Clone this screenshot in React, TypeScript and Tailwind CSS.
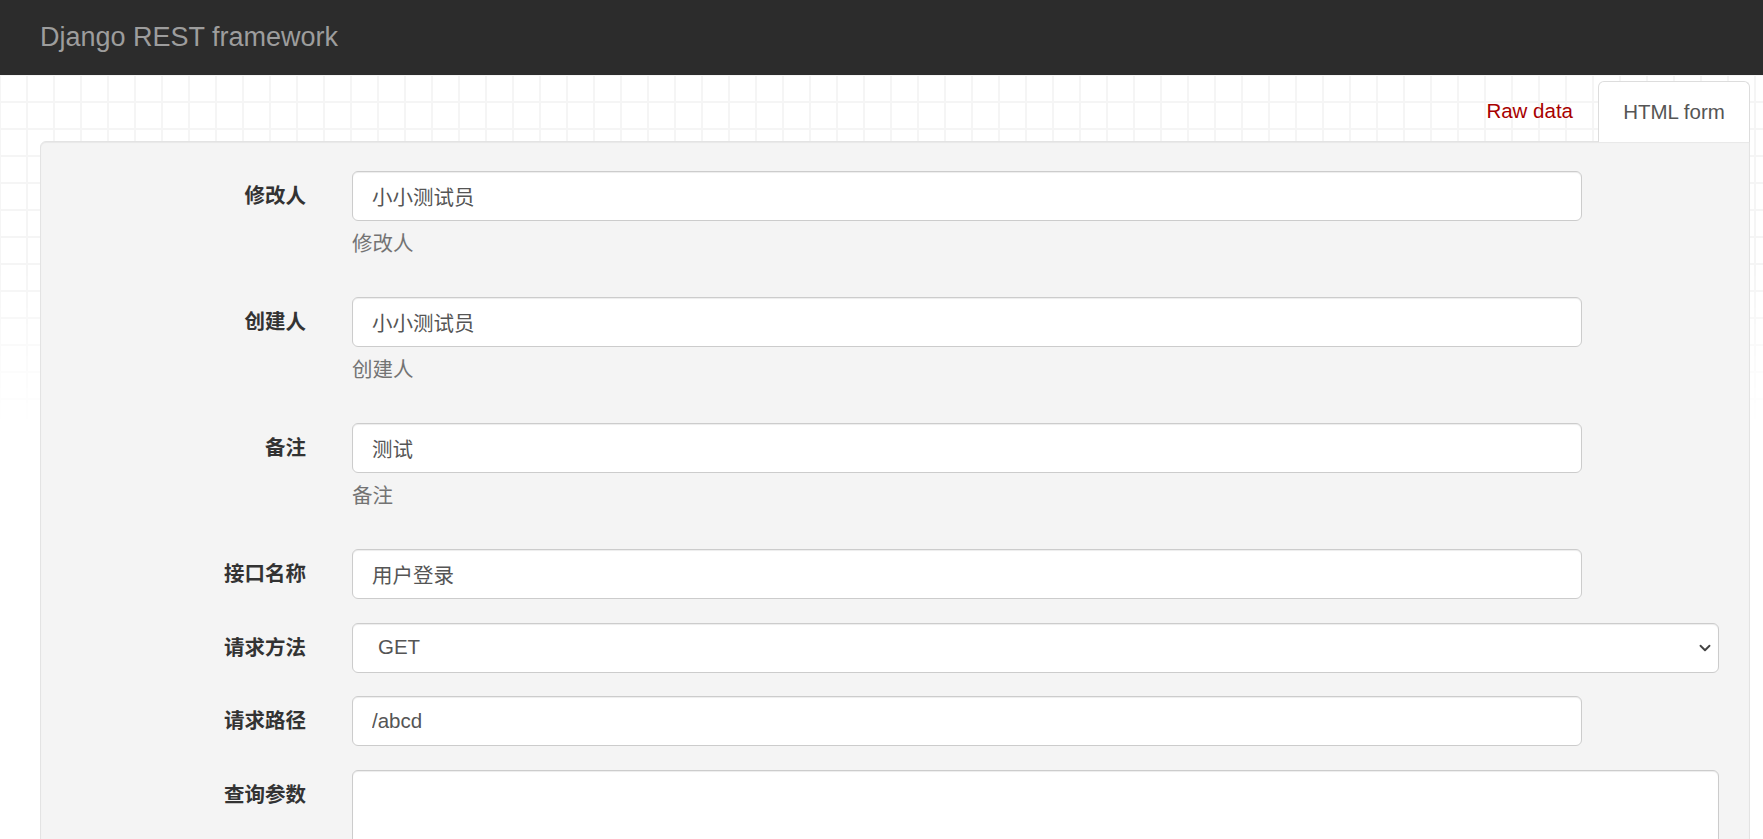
import { ChevronDown } from 'lucide-react';

type Field = {
  label: string;
  value: string;
  help?: string;
  kind?: 'input' | 'select' | 'textarea';
};

const fields: Field[] = [
  { label: '修改人', value: '小小测试员', help: '修改人' },
  { label: '创建人', value: '小小测试员', help: '创建人' },
  { label: '备注', value: '测试', help: '备注' },
  { label: '接口名称', value: '用户登录' },
  { label: '请求方法', value: 'GET', kind: 'select' },
  { label: '请求路径', value: '/abcd' },
  { label: '查询参数', value: '', kind: 'textarea' },
];

const inputBase =
  'block h-[50px] rounded-[6px] border border-[#cccccc] bg-white text-[20.5px] text-[#555555] shadow-[inset_0_1px_1px_rgba(0,0,0,0.075)] outline-none';

function Control({ field }: { field: Field }) {
  if (field.kind === 'select') {
    return (
      <div className="relative w-full">
        <select
          defaultValue={field.value}
          className={`${inputBase} w-full appearance-none pl-[25px] pr-10`}
        >
          <option>GET</option>
          <option>POST</option>
          <option>PUT</option>
          <option>DELETE</option>
        </select>
        <ChevronDown
          className="pointer-events-none absolute right-[5px] top-[16px] h-[18px] w-[18px] text-[#444]"
          strokeWidth={2.5}
        />
      </div>
    );
  }
  if (field.kind === 'textarea') {
    return (
      <textarea
        defaultValue={field.value}
        className="block h-[110px] w-full resize-y rounded-[6px] border border-[#cccccc] bg-white px-[19px] py-[9px] text-[20.5px] text-[#555555] shadow-[inset_0_1px_1px_rgba(0,0,0,0.075)] outline-none"
      />
    );
  }
  return (
    <input
      type="text"
      defaultValue={field.value}
      className={`${inputBase} w-[90%] px-[19px]`}
    />
  );
}

export default function App() {
  return (
    <div className="min-h-screen bg-white font-['Liberation_Sans','Noto_Sans_CJK_SC',sans-serif]">
      {/* navbar */}
      <div className="flex h-[75px] items-center bg-[#2c2c2c] px-[40px]">
        <span className="text-[27px] text-[#9d9d9d]">Django REST framework</span>
      </div>

      <div className="relative">
        {/* grid backdrop */}
        <div className="pointer-events-none absolute inset-x-0 top-0 h-[352px] bg-[linear-gradient(to_right,#f5f5f5_2px,transparent_2px),linear-gradient(to_bottom,#f5f5f5_2px,transparent_2px)] bg-[size:27px_27px] bg-[position:-1px_-1px] [mask-image:linear-gradient(to_bottom,black_55%,transparent)]" />

        <div className="relative pl-[40px] pr-[13px] pt-[6px]">
          {/* tabs */}
          <ul className="relative z-10 -mb-px flex justify-end">
            <li className="mr-[3px] flex h-[61px] items-center px-[22px] text-[20.5px] text-[#a80000]">
              Raw data
            </li>
            <li className="flex h-[61px] w-[152px] items-center justify-center rounded-t-[6px] border border-b-0 border-[#dddddd] bg-white text-[20.5px] text-[#555555]">
              HTML form
            </li>
          </ul>

          {/* form well */}
          <div className="rounded-[6px] rounded-tr-none border border-[#e3e3e3] bg-[#f4f4f4] pt-[29px] pb-[20px] shadow-[inset_0_1px_1px_rgba(0,0,0,0.05)]">
            {fields.map((f) => (
              <div key={f.label} className="mb-[23.5px] flex items-start">
                <label className="w-[265px] shrink-0 pt-[10px] text-right text-[20.5px] font-bold leading-[30px] text-[#333333]">
                  {f.label}
                </label>
                <div className="ml-[46px] flex-1 pr-[30px]">
                  <Control field={f} />
                  {f.help && (
                    <div className="mt-[7.5px] mb-[15px] text-[20.5px] leading-[30px] text-[#737373]">
                      {f.help}
                    </div>
                  )}
                </div>
              </div>
            ))}
          </div>
        </div>
      </div>
    </div>
  );
}
